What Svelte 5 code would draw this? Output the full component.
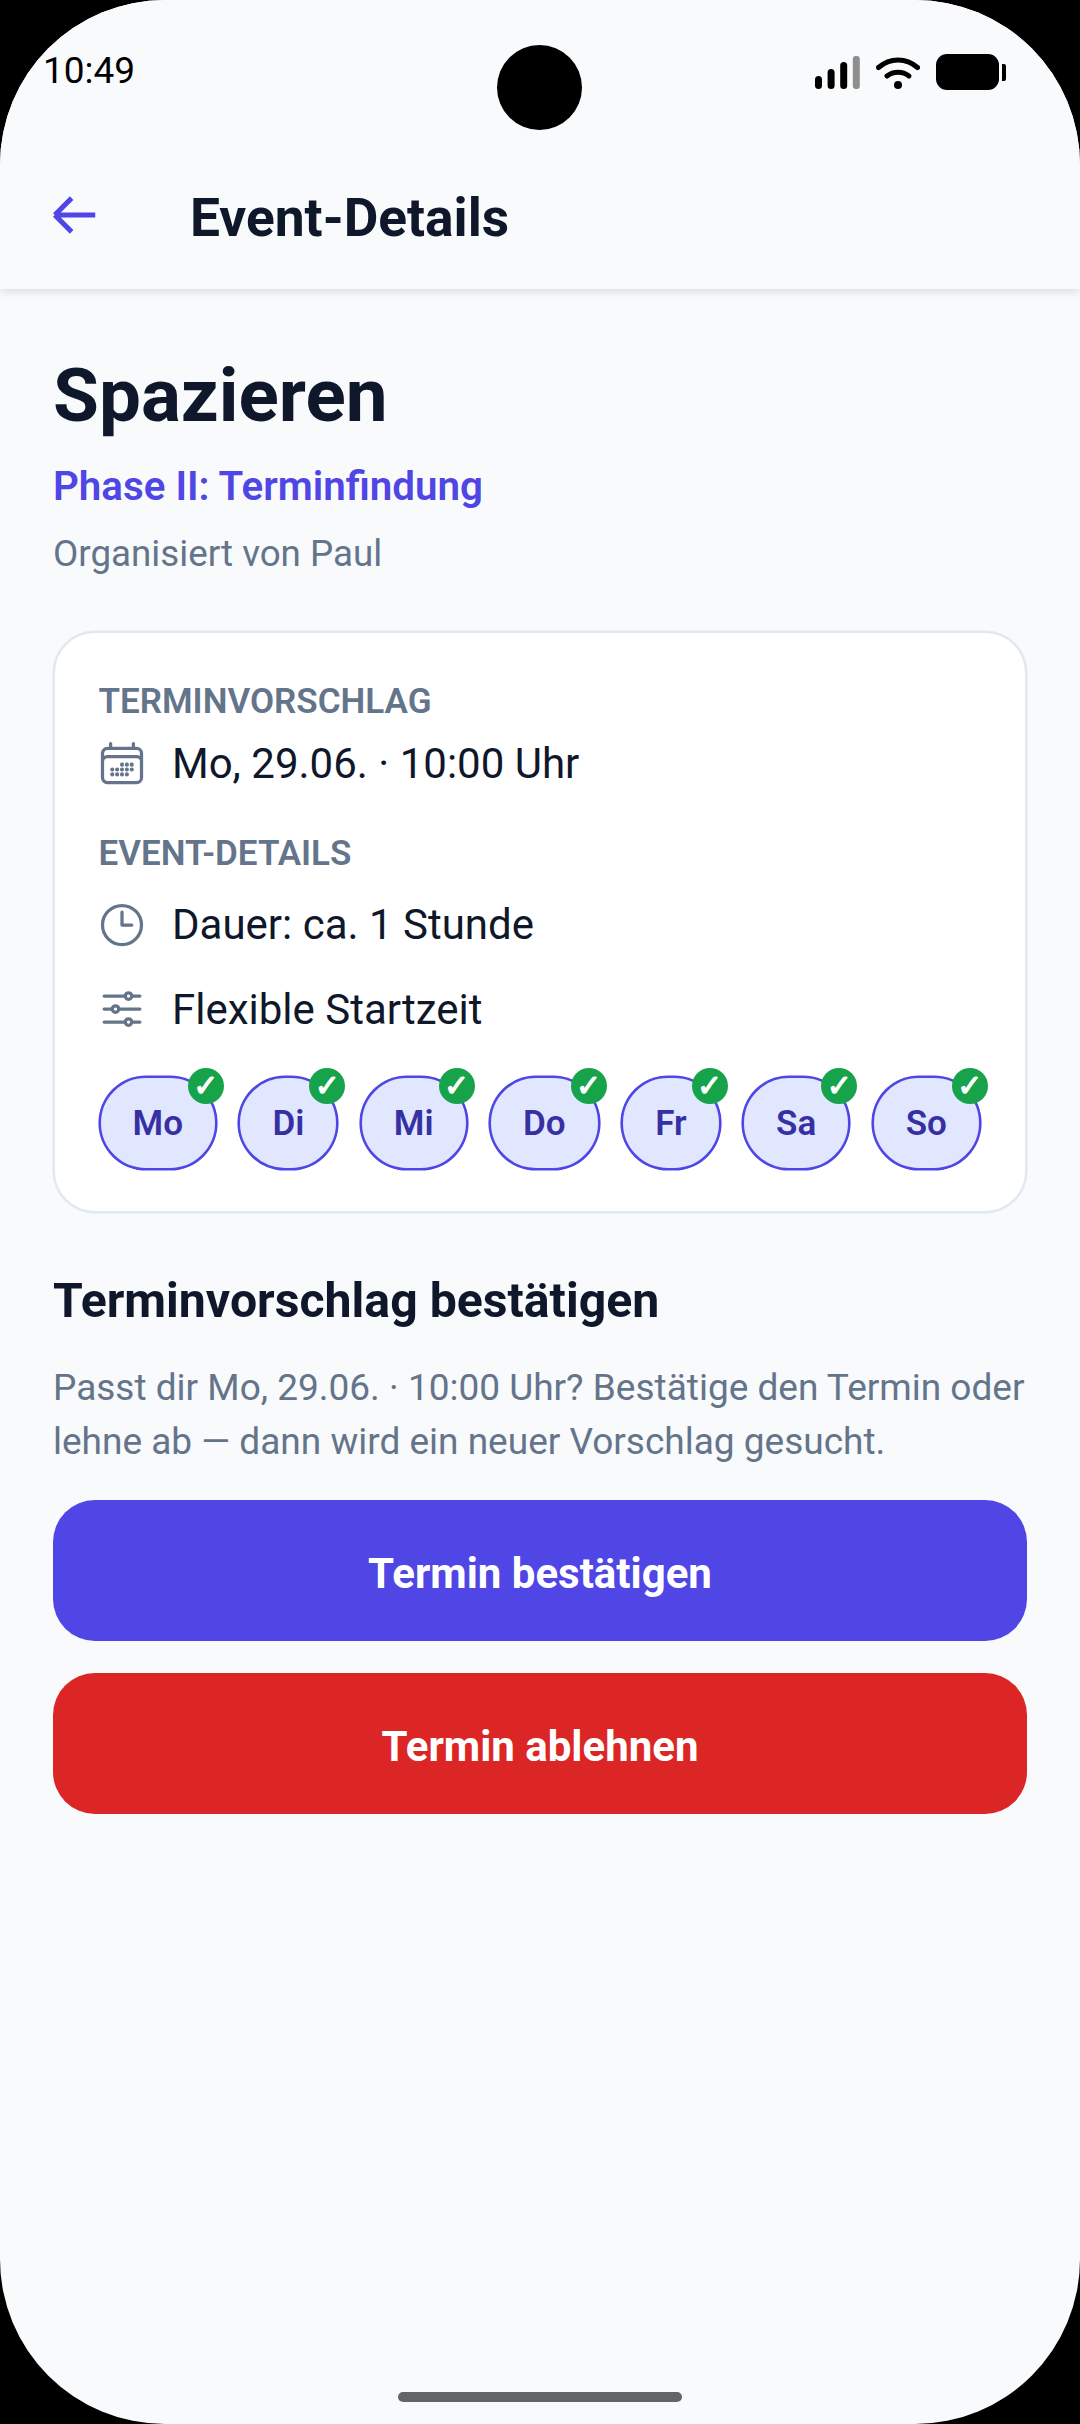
<script>
  const days = ["Mo", "Di", "Mi", "Do", "Fr", "Sa", "So"];
  const termin = "Mo, 29.06. · 10:00 Uhr";
</script>

<div class="screen">
  <div class="camera"></div>

  <header class="appbar">
    <div class="statusbar">
      <span class="time">10:49</span>
      <div class="status-icons">
        <svg class="signal" viewBox="0 0 45 33" width="45" height="33" aria-hidden="true">
          <rect x="0" y="20" width="7" height="13" rx="3.5" fill="#000" />
          <rect x="12.6" y="13" width="7" height="20" rx="3.5" fill="#000" />
          <rect x="25.2" y="6" width="7" height="27" rx="3.5" fill="#000" />
          <rect x="37.8" y="0" width="7" height="33" rx="3" fill="#8e8e8e" />
        </svg>
        <svg class="wifi" viewBox="0 0 44 33" width="44" height="33" aria-hidden="true">
          <path d="M2.5 11.5C14 1.5 30 1.5 41.5 11.5" fill="none" stroke="#000" stroke-width="5" stroke-linecap="round" />
          <path d="M11 20C17.5 15 26.500 15 33 20" fill="none" stroke="#000" stroke-width="5" stroke-linecap="round" />
          <circle cx="22" cy="29" r="4" fill="#000" />
        </svg>
        <div class="battery"></div>
      </div>
    </div>
    <div class="toolbar">
      <svg class="back" viewBox="0 0 24 24" width="54" height="54" aria-hidden="true">
        <path d="M10.5 19.5 3 12m0 0 7.5-7.5M3 12h18" fill="none" stroke="#4f46e5" stroke-width="2.2" />
      </svg>
      <h1>Event-Details</h1>
    </div>
  </header>

  <main class="content">
    <h2 class="event-name">Spazieren</h2>
    <p class="phase">Phase II: Terminfindung</p>
    <p class="organizer">Organisiert von Paul</p>

    <section class="card">
      <div class="label">TERMINVORSCHLAG</div>
      <div class="row date-row">
        <svg viewBox="0 0 24 24" width="52" height="52" aria-hidden="true">
          <path d="M6.75 3v2.25M17.25 3v2.25M3 18.75V7.500a2.250 2.250 0 0 1 2.250-2.250h13.500A2.250 2.250 0 0 1 21 7.500v11.250m-18 0A2.250 2.250 0 0 0 5.250 21h13.500A2.250 2.250 0 0 0 21 18.750m-18 0v-7.500A2.250 2.250 0 0 1 5.250 9h13.500A2.250 2.250 0 0 1 21 11.250v7.500" />
          <path class="dots" d="M12 12.750h.008M12 15h.008M12 17.250h.008M9.750 15h.008M9.750 17.250h.008M7.500 15h.008M7.500 17.250h.008M14.250 12.750h.008M14.250 15h.008M14.250 17.250h.008M16.500 12.750h.008M16.500 15h.008" />
        </svg>
        <span>{termin}</span>
      </div>

      <div class="label second">EVENT-DETAILS</div>
      <div class="row first-detail">
        <svg viewBox="0 0 24 24" width="52" height="52" aria-hidden="true">
          <path d="M12 6v6h4.500m4.500 0a9 9 0 1 1-18 0 9 9 0 0 1 18 0Z" />
        </svg>
        <span>Dauer: ca. 1 Stunde</span>
      </div>
      <div class="row">
        <svg class="flip" viewBox="0 0 24 24" width="52" height="52" aria-hidden="true">
          <path d="M10.500 6h9.750M10.500 6a1.500 1.500 0 1 1-3 0m3 0a1.500 1.500 0 1 0-3 0M3.750 6H7.500m3 12h9.750m-9.750 0a1.500 1.500 0 0 1-3 0m3 0a1.500 1.500 0 0 0-3 0m-3.750 0H7.500m9-6h3.750m-3.750 0a1.500 1.500 0 0 1-3 0m3 0a1.500 1.500 0 0 0-3 0m-9.750 0h9.750" />
        </svg>
        <span>Flexible Startzeit</span>
      </div>

      <div class="days">
        {#each days as day}
          <div class="day">
            {day}
            <span class="check">✓</span>
          </div>
        {/each}
      </div>
    </section>

    <h3>Terminvorschlag bestätigen</h3>
    <p class="hint">Passt dir {termin}? Bestätige den Termin oder lehne ab — dann wird ein neuer Vorschlag gesucht.</p>

    <button class="btn confirm">Termin bestätigen</button>
    <button class="btn decline">Termin ablehnen</button>
  </main>

  <div class="home-bar"></div>
</div>

<style>
  :global(body) {
    margin: 0;
    background: #000;
  }

  .screen {
    position: relative;
    width: 1080px;
    height: 2424px;
    background: #f8fafc;
    border-radius: 165px;
    overflow: hidden;
    font-family: Roboto, sans-serif;
    color: #0f172a;
  }

  .camera {
    position: absolute;
    left: 497px;
    top: 45px;
    width: 85px;
    height: 85px;
    border-radius: 50%;
    background: #000;
  }

  .appbar {
    height: 289px;
    box-shadow: 0 3px 8px rgba(15, 23, 42, 0.12);
    background: #f8fafc;
  }

  .statusbar {
    height: 140px;
    padding: 0 81px 0 43px;
    display: flex;
    justify-content: space-between;
    align-items: flex-start;
  }

  .time {
    margin-top: 50px;
    font-size: 37px;
    line-height: 42px;
    color: #000;
  }

  .status-icons {
    margin-top: 54px;
    display: flex;
    align-items: flex-start;
    gap: 16px;
  }

  .signal,
  .wifi {
    margin-top: 2px;
  }

  .battery {
    position: relative;
    width: 63px;
    height: 36px;
    border-radius: 11px;
    background: #000;
  }

  .battery::after {
    content: "";
    position: absolute;
    right: -7px;
    top: 10px;
    width: 4px;
    height: 17px;
    border-radius: 0 2px 2px 0;
    background: #000;
  }

  .toolbar {
    display: flex;
    align-items: center;
    padding-left: 48px;
    gap: 88px;
    height: 150px;
  }

  h1 {
    margin: 5px 0 0;
    font-size: 53.3px;
    font-weight: 700;
  }

  .content {
    padding: 0 53px;
  }

  .event-name {
    margin: 64px 0 0;
    font-size: 74.6px;
    line-height: 86px;
    font-weight: 700;
  }

  .phase {
    margin: 25px 0 0;
    font-size: 40.3px;
    line-height: 46px;
    font-weight: 600;
    color: #4f46e5;
  }

  .organizer {
    margin: 22px 0 0;
    font-size: 36.75px;
    line-height: 44px;
    color: #64748b;
  }

  .card {
    margin-top: 55px;
    box-sizing: border-box;
    padding: 48px 42px 41px 43.5px;
    background: #fff;
    border: 2px solid #e2e8f0;
    box-shadow: 0 0 0 0.6px #e2e8f0;
    border-radius: 42px;
  }

  .label {
    font-size: 35px;
    line-height: 42px;
    font-weight: 600;
    color: #64748b;
  }

  .label.second {
    margin-top: 36.5px;
  }

  .row {
    display: flex;
    align-items: center;
    gap: 24px;
    height: 84.5px;
    font-size: 42px;
  }

  .date-row {
    height: 66px;
    margin-top: 7px;
  }

  .first-detail {
    margin-top: 8px;
  }

  .row svg {
    flex: none;
    margin-left: -2.5px;
    fill: none;
    stroke: #64748b;
    stroke-width: 1.5;
    stroke-linecap: round;
    stroke-linejoin: round;
  }

  .row svg .dots {
    stroke-width: 1.9;
  }

  .flip {
    transform: scaleX(-1);
  }

  .days {
    margin-top: 24px;
    display: flex;
    gap: 21.5px;
  }

  .day {
    position: relative;
    height: 94px;
    box-sizing: border-box;
    padding: 2px 32px 0;
    display: flex;
    align-items: center;
    background: #e0e7ff;
    border: 2px solid #4f46e5;
    box-shadow: 0 0 0 0.6px #4f46e5;
    border-radius: 47px;
    color: #3730a3;
    font-size: 35px;
    font-weight: 600;
  }

  .check {
    position: absolute;
    top: -10px;
    right: -9px;
    width: 36px;
    height: 36px;
    border-radius: 50%;
    background: #16a34a;
    color: #fff;
    font-size: 30px;
    font-family: "DejaVu Sans", sans-serif;
    -webkit-text-stroke: 1.2px #fff;
    display: flex;
    align-items: center;
    justify-content: center;
  }

  h3 {
    margin: 60.5px 0 0;
    font-size: 48.2px;
    line-height: 56px;
    font-weight: 700;
  }

  .hint {
    margin: 32px 0 0;
    font-size: 37px;
    line-height: 54px;
    color: #64748b;
  }

  .btn {
    display: block;
    width: 100%;
    height: 141px;
    padding: 5px 0 0;
    border: none;
    border-radius: 42px;
    color: #fff;
    font-family: inherit;
    font-size: 42px;
    font-weight: 700;
  }

  .confirm {
    margin-top: 31px;
    background: #4f46e5;
  }

  .decline {
    margin-top: 32px;
    background: #dc2626;
  }

  .home-bar {
    position: absolute;
    left: 398px;
    top: 2392px;
    width: 284px;
    height: 10px;
    border-radius: 5px;
    background: #636466;
  }
</style>
